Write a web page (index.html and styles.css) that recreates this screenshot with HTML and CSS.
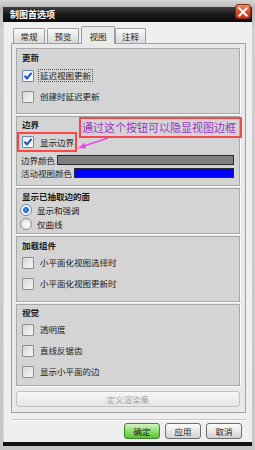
FILE: index.html
```html
<!DOCTYPE html>
<html>
<head>
<meta charset="utf-8">
<link rel="stylesheet" href="styles.css">
</head>
<body>
<div class="window">
  <div class="titlebar">
    <span class="title">制图首选项</span>
    <span class="close"><svg width="10" height="10" viewBox="0 0 10 10"><path d="M1.5 1.5 L8.5 8.5 M8.5 1.5 L1.5 8.5" stroke="#fff" stroke-width="2" stroke-linecap="square"/></svg></span>
  </div>
  <div class="client">
    <div class="tabs">
      <div class="tab">常规</div>
      <div class="tab">预览</div>
      <div class="tab sel">视图</div>
      <div class="tab last">注释</div>
    </div>
    <div class="panel">
      <div class="group g1">
        <div class="gtitle t16">更新</div>
        <div class="row r21"><span class="cb on"><svg width="10" height="10" viewBox="0 0 10 10"><path d="M1.5 4.8 L4 7.5 L8.6 1.8" fill="none" stroke="#1c56c4" stroke-width="2"/></svg></span><span class="lbl focus">延迟视图更新</span></div>
        <div class="row r21"><span class="cb"></span><span class="lbl">创建时延迟更新</span></div>
      </div>
      <div class="group g2">
        <div class="gtitle t14">边界</div>
        <div class="row r22"><span class="cb on"><svg width="10" height="10" viewBox="0 0 10 10"><path d="M1.5 4.8 L4 7.5 L8.6 1.8" fill="none" stroke="#1c56c4" stroke-width="2"/></svg></span><span class="lbl">显示边界</span></div>
        <div class="crow"><span class="clbl">边界颜色</span><span class="bar gray"></span></div>
        <div class="crow"><span class="clbl">活动视图颜色</span><span class="bar blue"></span></div>
      </div>
      <div class="group g3">
        <div class="gtitle t14">显示已抽取边的面</div>
        <div class="row r14 rad"><span class="radio on"></span><span class="rlbl">显示和强调</span></div>
        <div class="row r14 rad"><span class="radio"></span><span class="rlbl">仅曲线</span></div>
      </div>
      <div class="group g4">
        <div class="gtitle t15">加载组件</div>
        <div class="row r21"><span class="cb"></span><span class="lbl">小平面化视图选择时</span></div>
        <div class="row r21"><span class="cb"></span><span class="lbl">小平面化视图更新时</span></div>
      </div>
      <div class="group g5">
        <div class="gtitle t14">视觉</div>
        <div class="row r21"><span class="cb"></span><span class="lbl">透明度</span></div>
        <div class="row r21"><span class="cb"></span><span class="lbl">直线反锯齿</span></div>
        <div class="row r21"><span class="cb"></span><span class="lbl">显示小平面的边</span></div>
      </div>
      <div class="wide-btn">定义渲染集</div>
    </div>
    <div class="sep"></div>
    <div class="buttons">
      <div class="btn ok">确定</div>
      <div class="btn">应用</div>
      <div class="btn">取消</div>
    </div>
  </div>
  <div class="bottombar"></div>

  <div class="mark-box"></div>
  <div class="note">通过这个按钮可以隐显视图边框</div>
  <svg class="arrow" width="34" height="14" viewBox="0 0 34 14"><path d="M31 1 L4 10" stroke="#e64ce6" stroke-width="1.6" fill="none"/><path d="M1 11 L8 5.5 L9 11.5 Z" fill="#e64ce6"/></svg>
</div>
</body>
</html>
```

FILE: styles.css
```css
html, body {
  margin: 0;
  padding: 0;
}
body {
  width: 255px;
  height: 450px;
  overflow: hidden;
  font-family: "Noto Sans CJK SC", "Noto Sans", sans-serif;
  font-size: 8.5px;
  color: #1a1a1a;
}
.window {
  position: relative;
  width: 255px;
  height: 450px;
  box-sizing: border-box;
  padding: 0 3px 4px 3px;
  background: linear-gradient(#d6d6d6, #b8b8b8 8px, #cfcfcf 30px, #c6c6c6);
  display: flex;
  flex-direction: column;
}
.titlebar {
  height: 15px;
  margin-top: 7px;
  background: linear-gradient(#3e3e3e, #1a1a1a 50%, #0c0c0c);
  display: flex;
  align-items: center;
  padding-left: 7px;
  color: #fff;
  font-weight: bold;
  font-size: 9px;
}
.close {
  position: absolute;
  top: 4px;
  right: 4px;
  width: 16px;
  height: 15px;
  box-sizing: border-box;
  border: 1px solid #8a2a16;
  border-radius: 3px;
  background: linear-gradient(#f08a6a, #e0502e 45%, #c83618);
  display: flex;
  align-items: center;
  justify-content: center;
}
.close svg { display: block; }
.client {
  flex: 1;
  background: #efefef;
  display: flex;
  flex-direction: column;
  border-left: 1px solid #d8d8d8;
}
.tabs {
  display: flex;
  align-items: flex-end;
  height: 17px;
  margin: 4px 0 0 9px;
  position: relative;
  z-index: 2;
}
.tab {
  height: 15px;
  width: 32px;
  box-sizing: border-box;
  border: 1px solid #9c9c9c;
  border-bottom: none;
  border-radius: 2px 2px 0 0;
  background: linear-gradient(#fbfbfb, #e4e4e4 60%, #d8d8d8);
  display: flex;
  align-items: center;
  justify-content: center;
  margin-right: 2px;
}
.tab.sel {
  height: 18px;
  width: 34px;
  margin-right: 0;
  margin-bottom: -1px;
  background: #eaeaea;
}
.tab.last { width: 31px; }
.panel {
  margin: 0 6px 0 7px;
  border: 1px solid #a2a2a2;
  background: #e9e9e9;
  padding: 4px 5px 5px 4px;
  display: flex;
  flex-direction: column;
}
.group {
  box-sizing: border-box;
  border: 1px solid #a8a8a8;
  background: #d4d4d4;
  box-shadow: 0 1px 0 #fbfbfb, 1px 0 0 #fbfbfb;
  margin-bottom: 2px;
  padding: 0 5px;
}
.g1 { height: 66px; }
.g2 { height: 70px; }
.g3 { height: 46px; }
.g4 { height: 66px; }
.g5 { height: 82px; }
.gtitle {
  font-weight: bold;
  display: flex;
  align-items: center;
}
.t14 { height: 14px; }
.t15 { height: 15px; }
.t16 { height: 16px; }
.row {
  display: flex;
  align-items: center;
}
.r14 { height: 14px; }
.r21 { height: 21px; }
.r22 { height: 22px; }
.cb {
  width: 12px;
  height: 12px;
  box-sizing: border-box;
  border: 1px solid #8e8e8e;
  border-radius: 1px;
  background: linear-gradient(135deg, #d8d8d8, #f6f6f6);
  margin-right: 6px;
  flex: none;
  display: flex;
  align-items: center;
  justify-content: center;
}
.cb.on {
  border-color: #6f87a8;
  background: linear-gradient(135deg, #e6eef8, #ffffff);
}
.cb svg { display: block; }
.lbl {
  line-height: 11px;
  border: 1px solid transparent;
  padding: 0 1px;
  margin-left: -2px;
}
.lbl.focus {
  border: 1px dotted #555;
}
.rad { margin-left: -2px; }
.radio {
  width: 12px;
  height: 12px;
  box-sizing: border-box;
  border: 1px solid #8e8e8e;
  border-radius: 50%;
  background: radial-gradient(circle at 60% 60%, #ffffff, #d8d8d8);
  margin-right: 5px;
  flex: none;
  position: relative;
}
.radio.on {
  border-color: #6f87a8;
  background: radial-gradient(circle, #4aa0f0 0, #1a64c8 2.6px, #ffffff 3.2px, #e4ecf4 6px);
}
.crow {
  height: 13px;
  display: flex;
  align-items: center;
  margin-left: -1px;
}
.clbl { margin-right: 2px; white-space: nowrap; }
.bar {
  flex: 1;
  height: 10px;
  box-sizing: border-box;
  border: 1px solid #2a2a2a;
}
.bar.gray { background: #808080; }
.bar.blue { background: #0000ff; }
.wide-btn {
  margin-top: 3px;
  height: 16px;
  box-sizing: border-box;
  border: 1px solid #c2c2c2;
  border-radius: 3px;
  background: linear-gradient(#f6f6f6, #e6e6e6);
  color: #a4a4a4;
  display: flex;
  align-items: center;
  justify-content: center;
}
.sep {
  margin: 6px 6px 0 8px;
  height: 1px;
  background: #c6c6c6;
  border-bottom: 1px solid #ffffff;
}
.buttons {
  display: flex;
  justify-content: flex-end;
  gap: 5px;
  margin-top: 2px;
  padding-right: 10px;
}
.btn {
  width: 36px;
  height: 16px;
  box-sizing: border-box;
  border: 1px solid #6e6e6e;
  border-radius: 3px;
  background: linear-gradient(#fdfdfd, #e8e8e8 50%, #d2d2d2);
  display: flex;
  align-items: center;
  justify-content: center;
}
.btn.ok {
  border-color: #3d8a2c;
  background: linear-gradient(#d4f7c4, #8ede6c 50%, #5cc13e);
}
.bottombar {
  height: 4px;
  background: #121212;
}
.mark-box {
  position: absolute;
  left: 17px;
  top: 132px;
  width: 60px;
  height: 20px;
  box-sizing: border-box;
  border: 2px solid #ff4646;
}
.note {
  position: absolute;
  left: 79px;
  top: 117px;
  width: 163px;
  height: 21px;
  box-sizing: border-box;
  border: 2px solid #f24a4a;
  color: #9a34c4;
  font-size: 11px;
  line-height: 16px;
  padding-left: 1px;
  white-space: nowrap;
  overflow: hidden;
}
.arrow {
  position: absolute;
  left: 77px;
  top: 137px;
}
```
